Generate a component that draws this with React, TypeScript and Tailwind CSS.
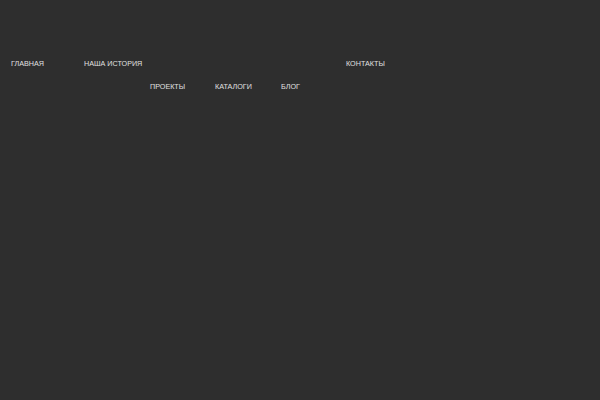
import React from 'react';

const rowOne = [
  { label: 'Главная', w: 'w-[73px]' },
  { label: 'Наша история', w: 'w-[262px]' },
  { label: 'Контакты', w: '' },
];

const rowTwo = [
  { label: 'Проекты', w: 'w-[65px]' },
  { label: 'Каталоги', w: 'w-[66px]' },
  { label: 'Блог', w: '' },
];

export default function App() {
  return (
    <div className="w-[600px] h-[400px] bg-[#2e2e2e] font-['Liberation_Sans',Arial,sans-serif] text-[#e0e0e0] text-[7.2px] leading-[12px] uppercase">
      <nav className="flex flex-col gap-[11px] pt-[58px]">
        <ul className="flex pl-[11px]">
          {rowOne.map((item) => (
            <li key={item.label} className={item.w}>
              <a href="#" className="whitespace-nowrap">{item.label}</a>
            </li>
          ))}
        </ul>
        <ul className="flex pl-[150px]">
          {rowTwo.map((item) => (
            <li key={item.label} className={item.w}>
              <a href="#" className="whitespace-nowrap">{item.label}</a>
            </li>
          ))}
        </ul>
      </nav>
    </div>
  );
}
